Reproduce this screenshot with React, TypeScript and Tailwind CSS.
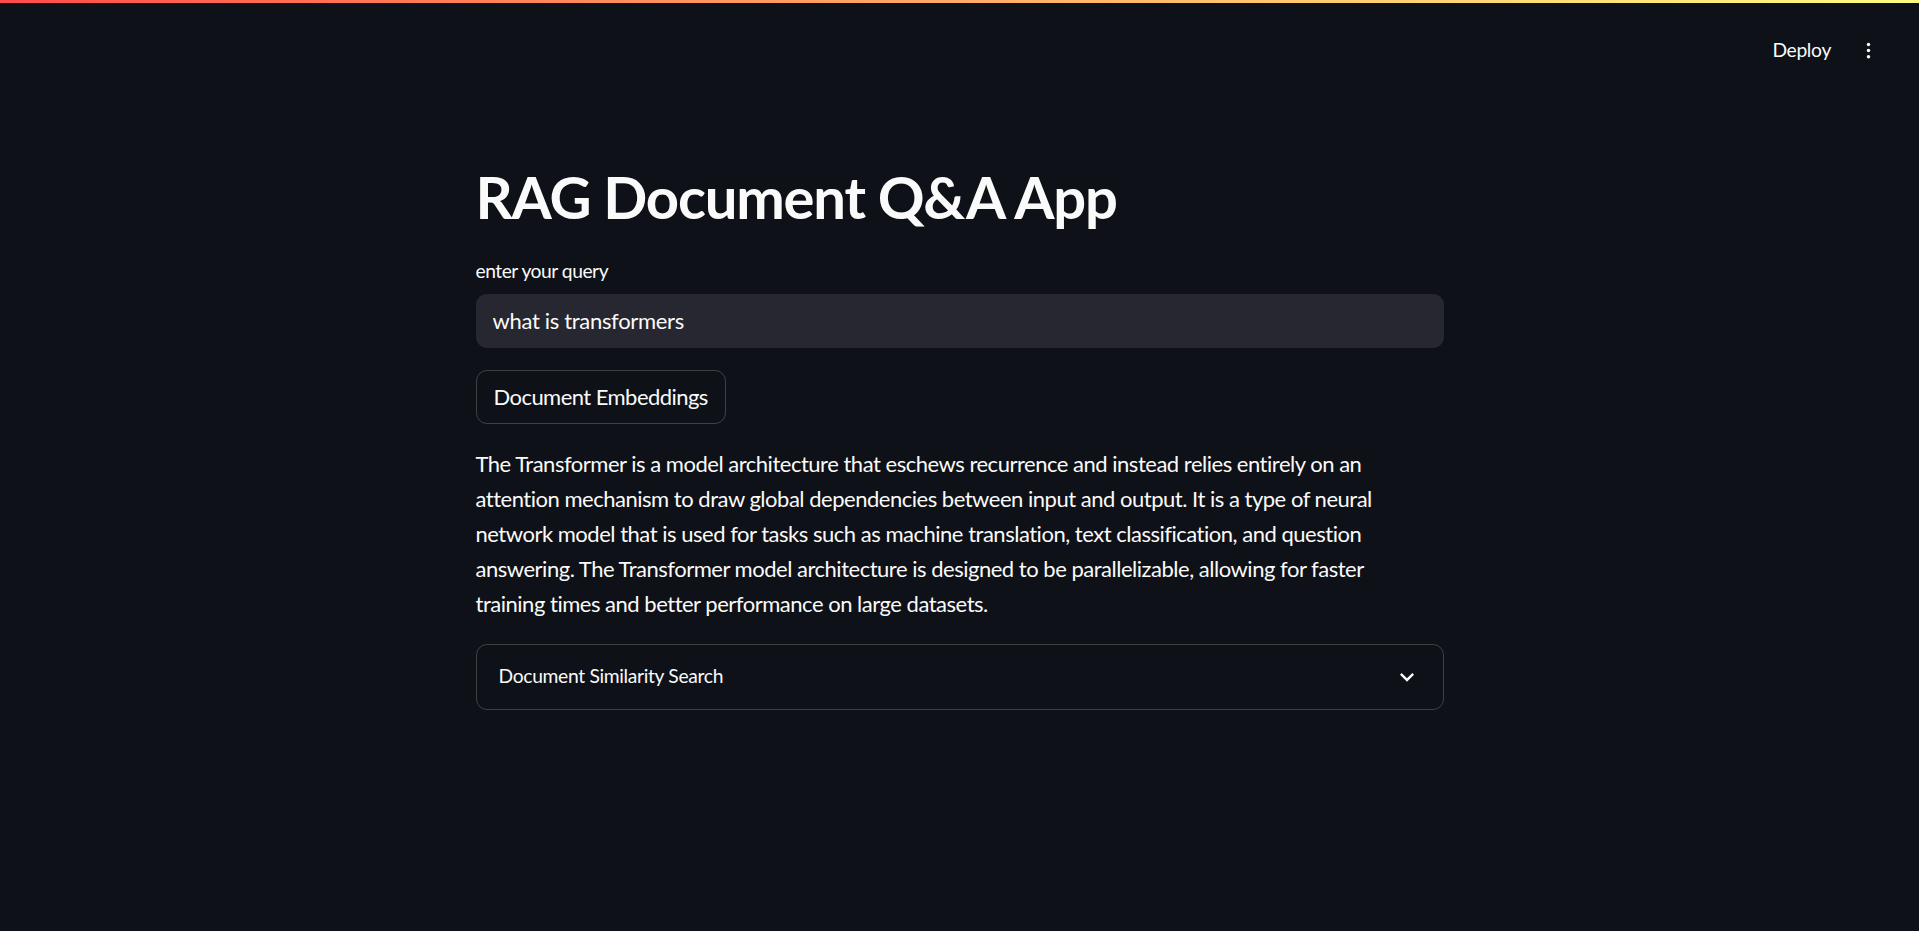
import { useState } from "react";

const answer =
  "The Transformer is a model architecture that eschews recurrence and instead relies entirely on an attention mechanism to draw global dependencies between input and output. It is a type of neural network model that is used for tasks such as machine translation, text classification, and question answering. The Transformer model architecture is designed to be parallelizable, allowing for faster training times and better performance on large datasets.";

export default function App() {
  const [query, setQuery] = useState("what is transformers");
  const [open, setOpen] = useState(false);

  return (
    <div className="min-h-screen bg-[#0e1117] text-[#fafafa] tracking-[-0.02em] font-['Lato','Noto_Sans',sans-serif]">
      <div className="h-[3px] bg-gradient-to-r from-[#ff4b4b] to-[#fffd80]" />

      {/* top bar */}
      <header className="h-[94px] flex items-center justify-end pr-[40px]">
        <button className="text-[19.25px] leading-none">Deploy</button>
        <button className="ml-[27px] w-[21px] h-[21px]">
          <svg viewBox="0 0 24 24" width="21" height="21" fill="currentColor">
            <circle cx="12" cy="5" r="2" />
            <circle cx="12" cy="12" r="2" />
            <circle cx="12" cy="19" r="2" />
          </svg>
        </button>
      </header>

      <main className="mx-auto w-[968px] pt-[63px] flex flex-col gap-[22px]">
        <h1 className="text-[58px] leading-[73.5px] font-bold tracking-[-1.2px]">
          RAG Document Q&amp;A App
        </h1>

        <div>
          <label className="block text-[19.25px] leading-[30px] h-[33px] mb-[5px] tracking-[-0.025em]">
            enter your query
          </label>
          <input
            className="w-full h-[54px] rounded-[11px] bg-[#262730] px-[17px] text-[22px] outline-none"
            value={query}
            onChange={(e) => setQuery(e.target.value)}
          />
        </div>

        <div>
          <button className="h-[54px] px-[17px] rounded-[11px] border border-[rgba(250,250,250,0.2)] text-[22px] tracking-[-0.025em]">
            Document Embeddings
          </button>
        </div>

        <p className="max-w-[930px] text-[22px] leading-[35.2px] tracking-[-0.022em]">{answer}</p>

        <div className="rounded-[11px] border border-[rgba(250,250,250,0.2)]">
          <button
            className="w-full h-[64px] flex items-center justify-between px-[22px] text-[19.25px]"
            onClick={() => setOpen(!open)}
          >
            <span>Document Similarity Search</span>
            <svg viewBox="0 0 24 24" width="28" height="28" fill="currentColor">
              <path d="M16.59 8.59 12 13.17 7.41 8.59 6 10l6 6 6-6z" />
            </svg>
          </button>
          {open && <div className="px-[22px] pb-[22px] text-[19.25px]" />}
        </div>
      </main>
    </div>
  );
}
